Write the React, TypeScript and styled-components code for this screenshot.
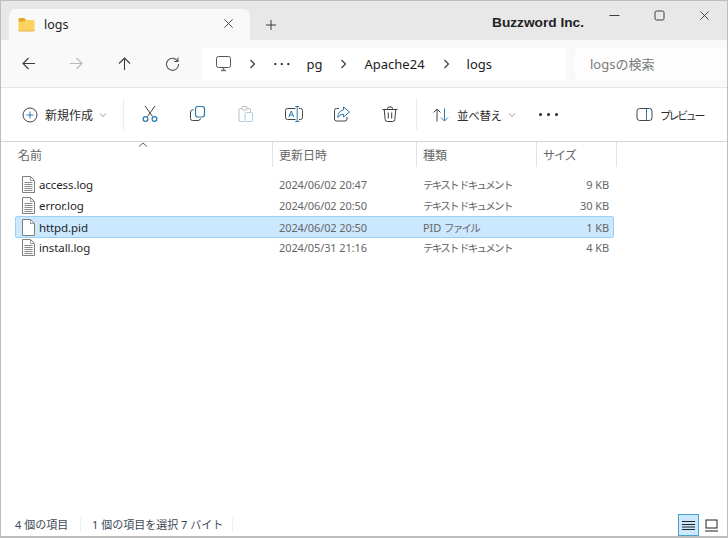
import React from "react";
import styled, { createGlobalStyle } from "styled-components";

const GlobalStyle = createGlobalStyle`
  html, body {
    margin: 0;
    padding: 0;
    background: #ffffff;
  }
  * { box-sizing: border-box; }
`;

const FONT = `"Noto Sans", "Noto Sans CJK JP", sans-serif`;
const BLUE = "#2a7ab0";
const INK = "#3c3c3c";

const Frame = styled.div`
  width: 728px;
  height: 538px;
  display: flex;
  flex-direction: column;
  border: 1px solid #bdbdbd;
  border-bottom-width: 2px;
  font-family: ${FONT};
  font-size: 12px;
  color: #1c1c1c;
  overflow: hidden;
`;

const TitleBar = styled.div`
  height: 39px;
  flex: none;
  display: flex;
  align-items: flex-end;
  padding-left: 8px;
  background: #e8e8e8;
`;

const Tab = styled.div`
  width: 241px;
  height: 31px;
  display: flex;
  align-items: center;
  padding: 0 16px 0 9px;
  background: #f9f9f9;
  border-radius: 7px 7px 0 0;
`;

const TabTitle = styled.span`
  flex: 1;
  margin-left: 9px;
  font-size: 12.5px;
`;

const TabAction = styled.div`
  display: flex;
  margin-top: -2px;
`;

const NewTab = styled.div`
  display: flex;
  margin-left: 15px;
  margin-bottom: 9px;
`;

const Brand = styled.div`
  position: absolute;
  top: 15px;
  left: 492px;
  font-size: 13.7px;
  font-weight: 700;
  color: #222;
  font-family: "Liberation Sans", sans-serif;
`;

const WindowButtons = styled.div`
  margin-left: auto;
  align-self: flex-start;
  display: flex;
  align-items: center;
  gap: 34px;
  padding: 9px 17px 0 0;
`;

const NavBar = styled.div`
  height: 48px;
  flex: none;
  display: flex;
  align-items: center;
  background: #f9f9f9;
  border-bottom: 1px solid #e3e3e3;
`;

const NavButtons = styled.div`
  width: 201px;
  flex: none;
  display: flex;
  align-items: center;
  padding-left: 3px;
`;

const Slot = styled.div`
  width: 48px;
  flex: none;
  display: flex;
  justify-content: center;
`;

const AddressBox = styled.div`
  width: 364px;
  height: 32px;
  flex: none;
  display: flex;
  align-items: center;
  padding-left: 13px;
  background: #ffffff;
  border-radius: 3px;
  font-size: 13px;
`;

const Crumb = styled.span<{ $w: number }>`
  margin-right: ${(p) => p.$w}px;
`;

const CrumbGap = styled.span<{ $w: number }>`
  display: inline-flex;
  margin-right: ${(p) => p.$w}px;
`;

const SearchBox = styled.div`
  flex: 1;
  height: 32px;
  margin-left: 9px;
  display: flex;
  align-items: center;
  padding-left: 15px;
  background: #fdfdfd;
  border-radius: 3px;
  font-size: 13px;
  color: #7a7a7a;
`;

const ToolBar = styled.div`
  height: 54px;
  flex: none;
  display: flex;
  align-items: center;
  background: #ffffff;
  border-bottom: 1px solid #d6d6d6;
`;

const ToolLabel = styled.span<{ $size?: number; $track?: number }>`
  font-size: ${(p) => p.$size ?? 12}px;
  color: #2c2c2c;
  letter-spacing: ${(p) => p.$track ?? 0}px;
`;

const LabelButton = styled.div<{ $w: number; $pl: number }>`
  width: ${(p) => p.$w}px;
  flex: none;
  padding-left: ${(p) => p.$pl}px;
  display: flex;
  align-items: center;
  gap: 7px;
`;

const Chevron = styled.span`
  display: inline-flex;
  margin-left: -1px;
`;

const Divider = styled.div`
  width: 1px;
  height: 32px;
  flex: none;
  margin-top: -2px;
  background: #ececec;
`;

const IconRow = styled.div`
  width: 292px;
  flex: none;
  display: flex;
  align-items: center;
  padding-left: 2px;
  margin-top: -1px;
`;

const More = styled.div`
  width: 102px;
  flex: none;
  display: flex;
  gap: 5px;
  padding-left: 8px;
  i {
    width: 3px;
    height: 3px;
    border-radius: 50%;
    background: #2a2a2a;
  }
`;

const HeaderRow = styled.div`
  height: 25px;
  flex: none;
  position: relative;
  display: grid;
  grid-template-columns: 272px 144px 120px 80px;
`;

const HeaderCell = styled.div<{ $first?: boolean; $track?: number }>`
  display: flex;
  align-items: center;
  padding-left: ${(p) => (p.$first ? 17 : 6)}px;
  border-right: 1px solid #e3e3e3;
  color: #666;
  font-size: 12px;
  letter-spacing: ${(p) => p.$track ?? 0}px;
`;

const SortCaret = styled.div`
  position: absolute;
  top: 0;
  left: 137px;
  display: flex;
`;

const FileList = styled.div`
  flex: 1;
  padding: 7px 0 0 14px;
`;

const FileRow = styled.div<{ $selected?: boolean }>`
  width: 599px;
  height: ${(p) => (p.$selected ? 22 : 21)}px;
  margin-bottom: ${(p) => (p.$selected ? -1 : 0)}px;
  display: grid;
  grid-template-columns: 262px 144px 120px 66px;
  align-items: center;
  padding-left: 1px;
  border: 1px solid ${(p) => (p.$selected ? "#99d1f5" : "transparent")};
  border-radius: 2px;
  background: ${(p) => (p.$selected ? "#cce8ff" : "transparent")};
`;

const NameCell = styled.div`
  display: flex;
  align-items: center;
  gap: 3px;
  padding-left: 4px;
  font-size: 11.5px;
  letter-spacing: -0.1px;
  color: #1f1f1f;
`;

const InfoCell = styled.div`
  font-size: 11px;
  color: #666;
  letter-spacing: -0.1px;
`;

const Kana = styled.span`
  font-size: 10.5px;
  letter-spacing: -1.7px;
`;

const SizeCell = styled(InfoCell)`
  text-align: right;
`;

const StatusBar = styled.div`
  height: 24px;
  flex: none;
  display: flex;
  align-items: center;
  padding: 2px 0 0 14px;
  font-size: 11px;
  color: #3d4a55;
`;

const StatusText = styled.span<{ $w: number }>`
  width: ${(p) => p.$w}px;
  flex: none;
  border-right: 1px solid #eeeeee;
  margin-right: 11px;
  line-height: 14px;
`;

const ViewButtons = styled.div`
  margin-left: auto;
  display: flex;
  align-items: center;
  gap: 2px;
  padding-right: 5px;
`;

const ViewButton = styled.div<{ $active?: boolean }>`
  width: 21px;
  height: 22px;
  display: flex;
  align-items: center;
  justify-content: center;
  border: 1px solid ${(p) => (p.$active ? "#4aa3cf" : "transparent")};
  background: ${(p) => (p.$active ? "#cce8ff" : "transparent")};
`;

type SvgProps = { children: React.ReactNode; size?: number; box?: number };

const Ico = ({ children, size = 20, box = 20 }: SvgProps) => (
  <svg
    width={size}
    height={size}
    viewBox={`0 0 ${box} ${box}`}
    fill="none"
    stroke={INK}
    strokeWidth={1}
    style={{ display: "block", flex: "none" }}
  >
    {children}
  </svg>
);

const FolderIcon = () => (
  <svg width="17" height="15" viewBox="0 0 17 15" style={{ display: "block", flex: "none" }}>
    <path d="M0.5 3 Q0.5 1 2 1 H6 L8 3 H15 Q16.5 3 16.5 4.5 V12.5 Q16.5 14 15 14 H2 Q0.5 14 0.5 12.5 Z" fill="#fbd35f" />
    <path d="M0.5 4.5 V3 Q0.5 1 2 1 H6 L8 3 L6 4.5 Z" fill="#e3a92e" />
    <path d="M0.5 12.5 Q0.5 14 2 14 H15 Q16.5 14 16.5 12.5" stroke="#e8b648" fill="none" />
  </svg>
);

const Close = ({ size = 12 }: { size?: number }) => (
  <Ico size={size} box={12}>
    <path d="M1.5 1.5 L10.5 10.5 M10.5 1.5 L1.5 10.5" />
  </Ico>
);

const Arrow = ({ d, color = INK }: { d: string; color?: string }) => (
  <svg width="15" height="15" viewBox="0 0 15 15" fill="none" stroke={color} strokeWidth={1.1} style={{ display: "block", flex: "none" }}>
    <path d={d} />
  </svg>
);

const ChevronRight = () => (
  <svg width="7" height="10" viewBox="0 0 7 10" fill="none" stroke="#333" strokeWidth={1.1} style={{ display: "block" }}>
    <path d="M1.5 1 L5.5 5 L1.5 9" />
  </svg>
);

const ChevronDown = () => (
  <svg width="8" height="6" viewBox="0 0 8 6" fill="none" stroke="#8a8a8a" strokeWidth={0.9} style={{ display: "block" }}>
    <path d="M1 1.5 L4 4.5 L7 1.5" />
  </svg>
);

const Monitor = () => (
  <Ico size={18} box={18}>
    <rect x="1.5" y="1.5" width="14" height="11" rx="2" stroke="#555" />
    <path d="M6 15.5 H11 M8.5 12.5 V15" stroke="#777" strokeWidth={1.6} />
  </Ico>
);

const PlusCircle = () => (
  <Ico size={16} box={16}>
    <circle cx="8" cy="8" r="7" stroke="#444" />
    <path d="M8 4.5 V11.5 M4.5 8 H11.5" stroke={BLUE} />
  </Ico>
);

const Scissors = () => (
  <Ico>
    <path d="M5 2 L12.5 12.5 M15 2 L7.5 12.5" stroke="#444" />
    <circle cx="5.5" cy="15" r="2.4" stroke={BLUE} strokeWidth={1.2} />
    <circle cx="14.5" cy="15" r="2.4" stroke={BLUE} strokeWidth={1.2} />
  </Ico>
);

const Copy = () => (
  <Ico size={18} box={18}>
    <rect x="6.5" y="1.5" width="9" height="10.5" rx="2.4" stroke={BLUE} strokeWidth={1.2} />
    <path d="M4.5 4.5 Q1.5 5 1.5 7 V13.5 Q1.5 15.5 3.5 15.5 H9 Q11 15.5 11.5 13.5" stroke="#444" />
  </Ico>
);

const Paste = () => (
  <Ico size={18} box={18}>
    <path d="M5 3.5 H3.5 Q2 3.5 2 5 V15 Q2 16.5 3.5 16.5 H7" stroke="#bdbdbd" />
    <path d="M10 3.5 H12 Q13.5 3.5 13.5 5 V7" stroke="#bdbdbd" />
    <rect x="5" y="1.5" width="5" height="3.5" rx="1" stroke="#bdbdbd" />
    <rect x="8" y="7.5" width="7.5" height="9" rx="1.4" stroke="#a8cfe0" />
  </Ico>
);

const Rename = () => (
  <Ico>
    <path d="M11.5 4.5 H3.5 Q1.5 4.5 1.5 6.5 V13.5 Q1.5 15.5 3.5 15.5 H11.5 M15 4.5 H16.5 Q18.5 4.5 18.5 6.5 V13.5 Q18.5 15.5 16.5 15.5 H15" stroke="#444" />
    <path d="M11.2 2.5 H15.2 M11.2 17.5 H15.2 M13.2 2.5 V17.5" stroke={BLUE} />
    <path d="M4.8 13 L7.3 7 L9.8 13 M5.7 11 H8.9" stroke={BLUE} />
  </Ico>
);

const Share = () => (
  <Ico size={18} box={18}>
    <path d="M6 3.5 H3.5 Q1.5 3.5 1.5 5.5 V14 Q1.5 16 3.5 16 H12 Q14 16 14 14 V12" stroke="#444" />
    <path d="M10.5 2 L16.5 7 L10.5 12 V9.3 Q7 9 4.8 12.5 Q5 6 10.5 4.8 Z" stroke={BLUE} />
  </Ico>
);

const Trash = () => (
  <Ico size={18} box={18}>
    <path d="M1.5 4.5 H16.5 M6.5 4.5 V3.5 Q6.5 2 8 2 H10 Q11.5 2 11.5 3.5 V4.5" />
    <path d="M3.2 4.5 L4.2 14.5 Q4.4 16.5 6.4 16.5 H11.6 Q13.6 16.5 13.8 14.5 L14.8 4.5" />
    <path d="M7.3 7.5 V13.5 M10.7 7.5 V13.5" />
  </Ico>
);

const SortIcon = () => (
  <Ico size={18} box={18}>
    <path d="M5 15.5 V3 M1.5 6.5 L5 3 L8.5 6.5" stroke="#444" />
    <path d="M12.5 2.5 V15 M9 11.5 L12.5 15 L16 11.5" stroke={BLUE} />
  </Ico>
);

const PreviewIcon = () => (
  <Ico size={17} box={17}>
    <rect x="1" y="2.5" width="15" height="12" rx="2.6" stroke="#444" />
    <path d="M10.5 2.5 V14.5" stroke={BLUE} />
  </Ico>
);

const FileIcon = ({ lines }: { lines: boolean }) => (
  <svg width="15" height="17" viewBox="0 0 15 17" fill="none" style={{ display: "block", flex: "none" }}>
    <path d="M1.5 0.5 H9.5 L13.5 4.5 V16.5 H1.5 Z" fill="#fdfdfd" stroke="#7f7f7f" />
    <path d="M9.5 0.5 V4.5 H13.5" stroke="#9a9a9a" />
    {lines && <path d="M3.5 6.5 H11.5 M3.5 8.5 H11.5 M3.5 10.5 H11.5 M3.5 12.5 H11.5 M3.5 14.5 H11.5" stroke="#8a8a8a" />}
  </svg>
);

const files = [
  { name: "access.log", date: "2024/06/02 20:47", type: <Kana>テキスト ドキュメント</Kana>, size: "9 KB", lines: true },
  { name: "error.log", date: "2024/06/02 20:50", type: <Kana>テキスト ドキュメント</Kana>, size: "30 KB", lines: true },
  { name: "httpd.pid", date: "2024/06/02 20:50", type: <>PID <Kana>ファイル</Kana></>, size: "1 KB", lines: false, selected: true },
  { name: "install.log", date: "2024/05/31 21:16", type: <Kana>テキスト ドキュメント</Kana>, size: "4 KB", lines: true },
];

export default function App() {
  return (
    <>
      <GlobalStyle />
      <Frame>
        <TitleBar>
          <Tab>
            <FolderIcon />
            <TabTitle>logs</TabTitle>
            <TabAction>
              <Close size={11} />
            </TabAction>
          </Tab>
          <NewTab>
            <Ico size={12} box={12}>
              <path d="M6 1 V11 M1 6 H11" />
            </Ico>
          </NewTab>
          <Brand>Buzzword Inc.</Brand>
          <WindowButtons>
            <Ico size={11} box={11}>
              <path d="M0.5 5.5 H10.5" />
            </Ico>
            <Ico size={11} box={11}>
              <rect x="1" y="1" width="9" height="9" rx="1.5" />
            </Ico>
            <Close size={11} />
          </WindowButtons>
        </TitleBar>
        <NavBar>
          <NavButtons>
            <Slot>
              <Arrow d="M14 7.5 H2 M7.5 2 L2 7.5 L7.5 13" />
            </Slot>
            <Slot>
              <Arrow d="M1 7.5 H13 M7.5 2 L13 7.5 L7.5 13" color="#b8b8b8" />
            </Slot>
            <Slot>
              <Arrow d="M7.5 14 V2 M2 7.5 L7.5 2 L13 7.5" />
            </Slot>
            <Slot>
              <Arrow d="M12.8 5.5 A6 6 0 1 0 13.5 8 M13 1.5 V5.5 H9" color="#555" />
            </Slot>
          </NavButtons>
          <AddressBox>
            <CrumbGap $w={16}>
              <Monitor />
            </CrumbGap>
            <CrumbGap $w={16}>
              <ChevronRight />
            </CrumbGap>
            <Crumb $w={15}>･･･</Crumb>
            <Crumb $w={17}>pg</Crumb>
            <CrumbGap $w={18}>
              <ChevronRight />
            </CrumbGap>
            <Crumb $w={18}>Apache24</Crumb>
            <CrumbGap $w={17}>
              <ChevronRight />
            </CrumbGap>
            <span>logs</span>
          </AddressBox>
          <SearchBox>logsの検索</SearchBox>
        </NavBar>
        <ToolBar>
          <LabelButton $w={122} $pl={21}>
            <PlusCircle />
            <ToolLabel>新規作成</ToolLabel>
            <Chevron>
              <ChevronDown />
            </Chevron>
          </LabelButton>
          <Divider />
          <IconRow>
            <Slot>
              <Scissors />
            </Slot>
            <Slot>
              <Copy />
            </Slot>
            <Slot>
              <Paste />
            </Slot>
            <Slot>
              <Rename />
            </Slot>
            <Slot>
              <Share />
            </Slot>
            <Slot>
              <Trash />
            </Slot>
          </IconRow>
          <Divider />
          <LabelButton $w={114} $pl={15}>
            <SortIcon />
            <ToolLabel $size={11.5} $track={-0.3}>並べ替え</ToolLabel>
            <Chevron>
              <ChevronDown />
            </Chevron>
          </LabelButton>
          <More>
            <i />
            <i />
            <i />
          </More>
          <LabelButton $w={90} $pl={3}>
            <PreviewIcon />
            <ToolLabel $size={11} $track={-2.4}>プレビュー</ToolLabel>
          </LabelButton>
        </ToolBar>
        <HeaderRow>
          <HeaderCell $first>名前</HeaderCell>
          <HeaderCell>更新日時</HeaderCell>
          <HeaderCell>種類</HeaderCell>
          <HeaderCell $track={-1}>サイズ</HeaderCell>
          <SortCaret>
            <svg width="10" height="6" viewBox="0 0 10 6" fill="none" stroke="#666" style={{ display: "block" }}>
              <path d="M1 4.5 L5 1 L9 4.5" />
            </svg>
          </SortCaret>
        </HeaderRow>
        <FileList>
          {files.map((f) => (
            <FileRow key={f.name} $selected={f.selected}>
              <NameCell>
                <FileIcon lines={f.lines} />
                {f.name}
              </NameCell>
              <InfoCell>{f.date}</InfoCell>
              <InfoCell>{f.type}</InfoCell>
              <SizeCell>{f.size}</SizeCell>
            </FileRow>
          ))}
        </FileList>
        <StatusBar>
          <StatusText $w={66}>4 個の項目</StatusText>
          <StatusText $w={141}>1 個の項目を選択 7 バイト</StatusText>
          <ViewButtons>
            <ViewButton $active>
              <svg width="13" height="11" viewBox="0 0 13 11" fill="none" stroke="#222" style={{ display: "block" }}>
                <path d="M0 1.5 H13 M0 4.5 H13 M0 7 H13 M0 9.5 H13" />
              </svg>
            </ViewButton>
            <ViewButton>
              <svg width="13" height="13" viewBox="0 0 13 13" fill="none" stroke="#222" style={{ display: "block" }}>
                <rect x="1" y="1" width="11" height="8" />
                <path d="M0 12 H13" />
              </svg>
            </ViewButton>
          </ViewButtons>
        </StatusBar>
      </Frame>
    </>
  );
}
